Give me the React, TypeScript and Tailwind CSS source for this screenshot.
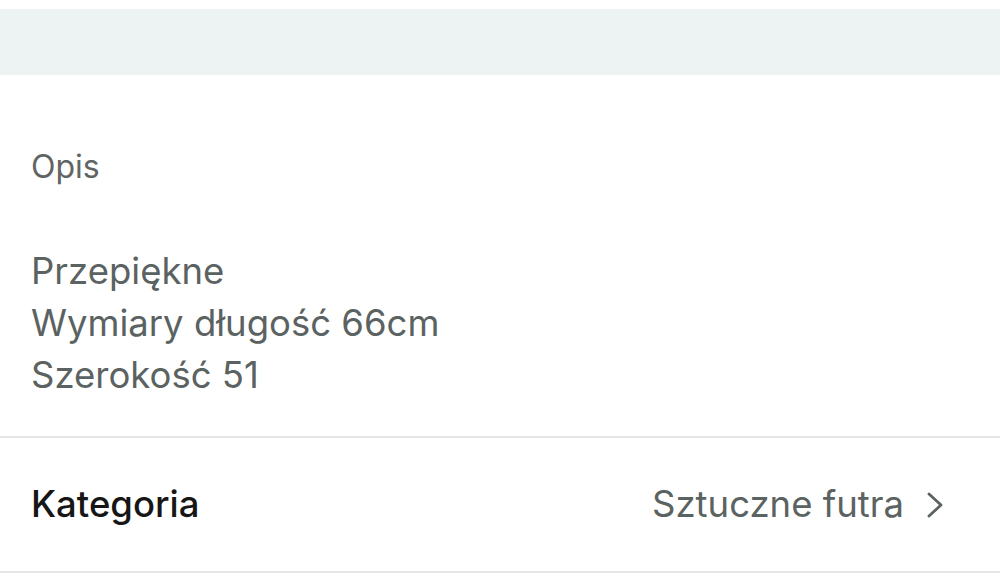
import React from 'react';

const lines = ['Przepiękne', 'Wymiary długość 66cm', 'Szerokość 51'];

export default function App() {
  return (
    <div className="w-[1000px] h-[586px] bg-white overflow-hidden font-['Inter',sans-serif]">
      <div className="h-[9px]" />
      <div className="h-[66px] bg-[#edf2f2] border-y border-[#f0f3f4]" />

      <div className="px-[31px] pt-[72px]">
        <p className="text-[32px] leading-[40px] text-[#5f6464]">Opis</p>
        <div className="mt-[58px] text-[36.5px] leading-[52px] text-[#5b6262]">
          {lines.map((line) => (
            <p key={line}>{line}</p>
          ))}
        </div>
      </div>

      <div className="mt-[35px] h-[2px] bg-[#e6e6e6]" />
      <div className="h-[133px] flex items-center justify-between pl-[31px] pr-[56px]">
        <span className="text-[36.5px] font-medium text-[#161616]">Kategoria</span>
        <div className="flex items-center gap-[22px]">
          <span className="text-[36.5px] text-[#5b6262]">Sztuczne futra</span>
          <svg width="18" height="28" viewBox="0 0 18 28" fill="none">
            <path d="M3 3 L15 14 L3 25" stroke="#5b6262" strokeWidth="2.8" strokeLinecap="round" strokeLinejoin="round" />
          </svg>
        </div>
      </div>
      <div className="h-[2px] bg-[#e6e6e6]" />
    </div>
  );
}
